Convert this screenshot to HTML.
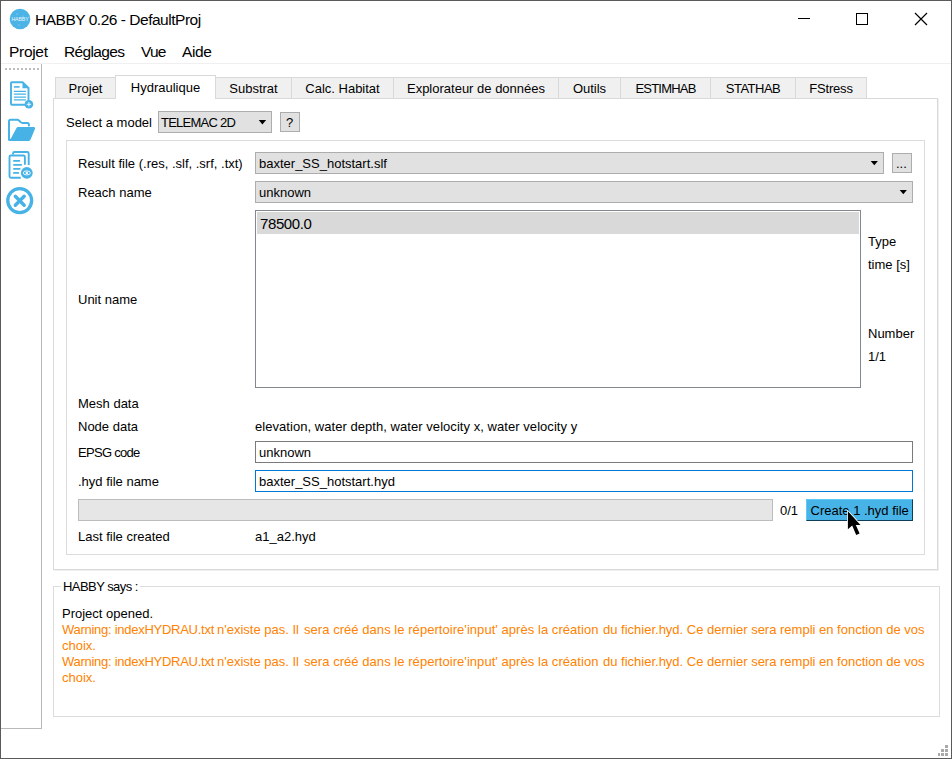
<!DOCTYPE html>
<html><head><meta charset="utf-8">
<style>
*{margin:0;padding:0;box-sizing:border-box}
html,body{width:952px;height:759px;overflow:hidden;background:#fff}
body{font-family:"Liberation Sans",sans-serif;font-size:13px;color:#000;position:relative}
.a{position:absolute}
.t{position:absolute;white-space:nowrap;line-height:15px}
#win{position:absolute;left:0;top:0;width:952px;height:759px;border:1px solid #5a5a5a}
.tab{position:absolute;top:77px;height:21px;background:#f0f0f0;border:1px solid #d9d9d9;border-bottom:none}
.tab span{position:absolute;top:3px;left:0;right:0;text-align:center;white-space:nowrap}
.combo{position:absolute;background:#e1e1e1;border:1px solid #adadad}
.btn{position:absolute;background:#e1e1e1;border:1px solid #adadad}
.arrow{position:absolute;width:0;height:0;border-left:5px solid transparent;border-right:5px solid transparent;border-top:5px solid #000}
.edit{position:absolute;background:#fff;border:1px solid #7a7a7a}
.warn{color:#ff8200}
</style></head><body>
<div id="win"></div>

<!-- title bar -->
<svg class="a" style="left:9px;top:8px" width="22" height="22" viewBox="0 0 22 22">
  <circle cx="11" cy="11" r="10.3" fill="#4cb3e6"/>
  <text x="11" y="13" font-family="Liberation Sans" font-size="5.2" fill="#e8f6fd" text-anchor="middle" letter-spacing="-0.1">HABBY</text><circle cx="8" cy="6" r="0.5" fill="#bfe6f8"/><circle cx="14" cy="8" r="0.5" fill="#bfe6f8"/><circle cx="10" cy="17" r="0.5" fill="#bfe6f8"/>
</svg>
<div class="t" style="left:35px;top:11px;font-size:15.5px;line-height:17px;letter-spacing:-0.48px">HABBY 0.26 - DefaultProj</div>
<!-- window controls -->
<div class="a" style="left:798px;top:18px;width:12px;height:1px;background:#000"></div>
<div class="a" style="left:856px;top:13px;width:12px;height:12px;border:1px solid #000"></div>
<svg class="a" style="left:914px;top:12px" width="14" height="14" viewBox="0 0 14 14"><path d="M1 1L13 13M13 1L1 13" stroke="#000" stroke-width="1.2"/></svg>

<!-- menu -->
<div class="t" style="left:9px;top:43px;font-size:15.5px;line-height:17px;letter-spacing:-0.3px">Projet</div>
<div class="t" style="left:64px;top:43px;font-size:15.5px;line-height:17px;letter-spacing:-0.65px">Réglages</div>
<div class="t" style="left:141px;top:43px;font-size:15.5px;line-height:17px;letter-spacing:-0.8px">Vue</div>
<div class="t" style="left:182px;top:43px;font-size:15.5px;line-height:17px;letter-spacing:-0.4px">Aide</div>
<div class="a" style="left:1px;top:63px;width:950px;height:1px;background:#f0f0f0"></div>

<!-- left toolbar -->
<div class="a" style="left:5px;top:68px;width:34px;height:2px;background:repeating-linear-gradient(90deg,#bdbdbd 0 2px,transparent 2px 4px)"></div>
<div class="a" style="left:41px;top:64px;width:1px;height:665px;background:#b9b9b9"></div><div class="a" style="left:1px;top:728px;width:41px;height:1px;background:#b9b9b9"></div>

<!-- tab panel -->
<div class="a" style="left:53px;top:98px;width:885px;height:472px;border:1px solid #d9d9d9;background:#fff;box-shadow:1px 1px 0 #efefef"></div>
<div class="tab" style="left:55px;width:61px"><span>Projet</span></div>
<div class="tab" style="left:215px;width:77px"><span>Substrat</span></div>
<div class="tab" style="left:291px;width:103px"><span>Calc. Habitat</span></div>
<div class="tab" style="left:393px;width:166px"><span>Explorateur de données</span></div>
<div class="tab" style="left:558px;width:63px"><span>Outils</span></div>
<div class="tab" style="left:620px;width:91px"><span style="letter-spacing:-0.8px">ESTIMHAB</span></div>
<div class="tab" style="left:710px;width:86px"><span style="letter-spacing:-0.5px">STATHAB</span></div>
<div class="tab" style="left:795px;width:72px"><span style="letter-spacing:-0.2px">FStress</span></div>
<div class="tab" style="left:115px;top:75px;width:101px;height:24px;background:#fff"><span style="top:4px">Hydraulique</span></div>

<div class="t" style="left:66px;top:115px">Select a model</div>
<div class="combo" style="left:158px;top:111px;width:114px;height:22px"><span class="t" style="left:2px;top:3px;letter-spacing:-0.75px">TELEMAC 2D</span><svg class="a" style="left:99px;top:7px" width="9" height="7"><path d="M0.75 1.1H8.1L4.43 5.6Z" fill="#000"/></svg></div>
<div class="btn" style="left:280px;top:112px;width:20px;height:20px"><span class="t" style="left:5px;top:2px">?</span></div>

<!-- group box -->
<div class="a" style="left:66px;top:140px;width:859px;height:415px;border:1px solid #dcdcdc"></div>

<div class="t" style="left:78px;top:156px">Result file (.res, .slf, .srf, .txt)</div>
<div class="combo" style="left:255px;top:152px;width:629px;height:22px"><span class="t" style="left:3px;top:3px">baxter_SS_hotstart.slf</span><svg class="a" style="left:614px;top:7px" width="9" height="7"><path d="M0.7 0.9H7.9L4.3 5.3Z" fill="#000"/></svg></div>
<div class="btn" style="left:892px;top:153px;width:20px;height:20px"><span class="t" style="left:3px;top:2px">...</span></div>

<div class="t" style="left:78px;top:185px">Reach name</div>
<div class="combo" style="left:255px;top:181px;width:658px;height:22px"><span class="t" style="left:3px;top:3px">unknown</span><svg class="a" style="left:643px;top:7px" width="9" height="7"><path d="M0.7 0.9H7.9L4.3 5.3Z" fill="#000"/></svg></div>

<div class="a" style="left:255px;top:210px;width:606px;height:178px;border:1px solid #828790;background:#fff">
  <div class="a" style="left:1px;top:1px;width:602px;height:22px;background:#d9d9d9"></div>
  <span class="t" style="left:4px;top:4px;font-size:15px;line-height:17px;letter-spacing:-0.4px">78500.0</span>
</div>
<div class="t" style="left:78px;top:292px">Unit name</div>
<div class="t" style="left:868px;top:234px">Type</div>
<div class="t" style="left:868px;top:257px">time [s]</div>
<div class="t" style="left:868px;top:326px">Number</div>
<div class="t" style="left:868px;top:349px">1/1</div>

<div class="t" style="left:78px;top:396px">Mesh data</div>
<div class="t" style="left:78px;top:419px">Node data</div>
<div class="t" style="left:255px;top:419px;letter-spacing:0.05px">elevation, water depth, water velocity x, water velocity y</div>

<div class="t" style="left:78px;top:445px;letter-spacing:-0.7px">EPSG code</div>
<div class="edit" style="left:255px;top:441px;width:658px;height:22px"><span class="t" style="left:3px;top:3px">unknown</span></div>
<div class="t" style="left:78px;top:474px">.hyd file name</div>
<div class="edit" style="left:255px;top:470px;width:658px;height:22px;border-color:#0078d7"><span class="t" style="left:3px;top:3px">baxter_SS_hotstart.hyd</span></div>

<div class="a" style="left:78px;top:499px;width:695px;height:22px;background:#e6e6e6;border:1px solid #bcbcbc"></div>
<div class="t" style="left:780px;top:503px">0/1</div>
<div class="a" style="left:806px;top:499px;width:107px;height:22px;background:#48b3e7;border:1px solid #0f3c57;border-top-color:#5cc9f7;border-left-color:#5cc9f7"><span class="t" style="left:3.5px;top:3px">Create 1 .hyd file</span></div>

<div class="t" style="left:78px;top:529px">Last file created</div>
<div class="t" style="left:255px;top:529px">a1_a2.hyd</div>

<!-- HABBY says -->
<div class="a" style="left:53px;top:586px;width:887px;height:131px;border:1px solid #dcdcdc"></div>
<div class="t" style="left:61px;top:579px;background:#fff;padding:0 2px;letter-spacing:-0.55px">HABBY says :</div>
<div class="t" style="left:62px;top:606px">Project opened.</div>
<div class="t warn" style="left:62px;top:622px;letter-spacing:-0.27px">Warning: indexHYDRAU.txt</div><div class="t warn" style="left:217px;top:622px">n'existe pas. Il</div><div class="t warn" style="left:304px;top:622px;letter-spacing:0.05px">sera créé dans le répertoire'input' après la création</div><div class="t warn" style="left:603px;top:622px">du fichier.hyd. Ce dernier sera rempli en fonction de vos</div>
<div class="t warn" style="left:62px;top:638px">choix.</div>
<div class="t warn" style="left:62px;top:654px;letter-spacing:-0.27px">Warning: indexHYDRAU.txt</div><div class="t warn" style="left:217px;top:654px">n'existe pas. Il</div><div class="t warn" style="left:304px;top:654px;letter-spacing:0.05px">sera créé dans le répertoire'input' après la création</div><div class="t warn" style="left:603px;top:654px">du fichier.hyd. Ce dernier sera rempli en fonction de vos</div>
<div class="t warn" style="left:62px;top:670px">choix.</div>


<svg class="a" style="left:0;top:0" width="42" height="230" viewBox="0 0 42 230">
 <g fill="none" stroke="#47b2e6" stroke-width="1.9" stroke-linejoin="round" stroke-linecap="round">
  <path d="M25.5 104.8H11.8Q11 104.8 11 104V83.1Q11 82.3 11.8 82.3H22.8L28.5 88V100.5"/>
 </g>
 <path d="M22.5 82.2V88.2H29.2Z" fill="#47b2e6"/>
 <g stroke="#47b2e6" stroke-linecap="butt">
  <path d="M13.9 86.9H19.6" stroke-width="1.6"/>
  <path d="M13.9 91.4H25.9M13.9 94.2H25.9M13.9 97.2H25.9M13.9 99.9H25.9" stroke-width="1.3"/>
 </g>
 <circle cx="28.9" cy="104.3" r="4.3" fill="#47b2e6"/>
 <path d="M26.7 104.3H31.1M28.9 102.1V106.5" stroke="#fff" stroke-width="0.9"/>
 <!-- folder -->
 <path d="M9 139V121.3Q9 119.8 10.5 119.8H17.3Q18.3 119.8 19.2 120.8L20.6 122.1Q21.4 122.9 22.6 122.9H27.4Q28.9 122.9 28.9 124.4V125.4" fill="none" stroke="#47b2e6" stroke-width="2" stroke-linecap="round" stroke-linejoin="round"/>
 <path d="M17.9 127H33.8Q35.6 127 35 128.7L30.6 139.6Q30.1 141 28.6 141H9.6Q8 141 8 139.4V138.6L10.6 139.1L16.4 128.2Q16.9 127 17.9 127Z" fill="#47b2e6"/>
 <!-- doc eye -->
 <g fill="none" stroke="#47b2e6" stroke-width="1.9" stroke-linejoin="round" stroke-linecap="butt">
  <path d="M13 154.5V153.5Q13 152 14.5 152H27.2Q28.7 152 28.7 153.5V165"/>
  <path d="M20.8 177.7H11Q9.5 177.7 9.5 176.2V157Q9.5 155.5 11 155.5H23.4Q24.9 155.5 24.9 157V164.8"/>
 </g>
 <g stroke="#47b2e6" stroke-width="1.8" stroke-linecap="round">
  <path d="M13.9 160.8H19.4M13.9 164.8H21.2M13.9 168.8H19.8M13.9 172.9H18.3"/>
 </g>
 <circle cx="26.8" cy="172.9" r="5.9" fill="#47b2e6"/>
 <ellipse cx="26.8" cy="172.9" rx="3.6" ry="2" fill="none" stroke="#fff" stroke-width="0.9"/>
 <circle cx="26.8" cy="172.9" r="1.2" fill="#fff"/>
 <!-- close circle -->
 <circle cx="19.7" cy="200.6" r="11.95" fill="none" stroke="#47b2e6" stroke-width="3.3"/>
 <path d="M15.3 196.2L24.2 205.2M24.2 196.2L15.3 205.2" stroke="#47b2e6" stroke-width="3.4" stroke-linecap="round"/>
</svg>

<svg class="a" style="left:846px;top:510px" width="18" height="28" viewBox="0 0 18 28">
 <path d="M1.9 1.3V19.2L6.2 15.6L10.2 25L13.6 23.6L9.8 14.9H14.5Z" fill="#000" stroke="#fff" stroke-width="1.6" stroke-linejoin="miter" paint-order="stroke"/>
</svg>

<svg class="a" style="left:938px;top:745px" width="12" height="12" viewBox="0 0 12 12" fill="#a9a9a9">
 <rect x="7" y="0" width="3" height="3"/>
 <rect x="3" y="4" width="3" height="3"/><rect x="7" y="4" width="3" height="3"/>
 <rect x="0" y="8" width="2" height="3"/><rect x="3" y="8" width="3" height="3"/><rect x="7" y="8" width="3" height="3"/>
</svg>
</body></html>
